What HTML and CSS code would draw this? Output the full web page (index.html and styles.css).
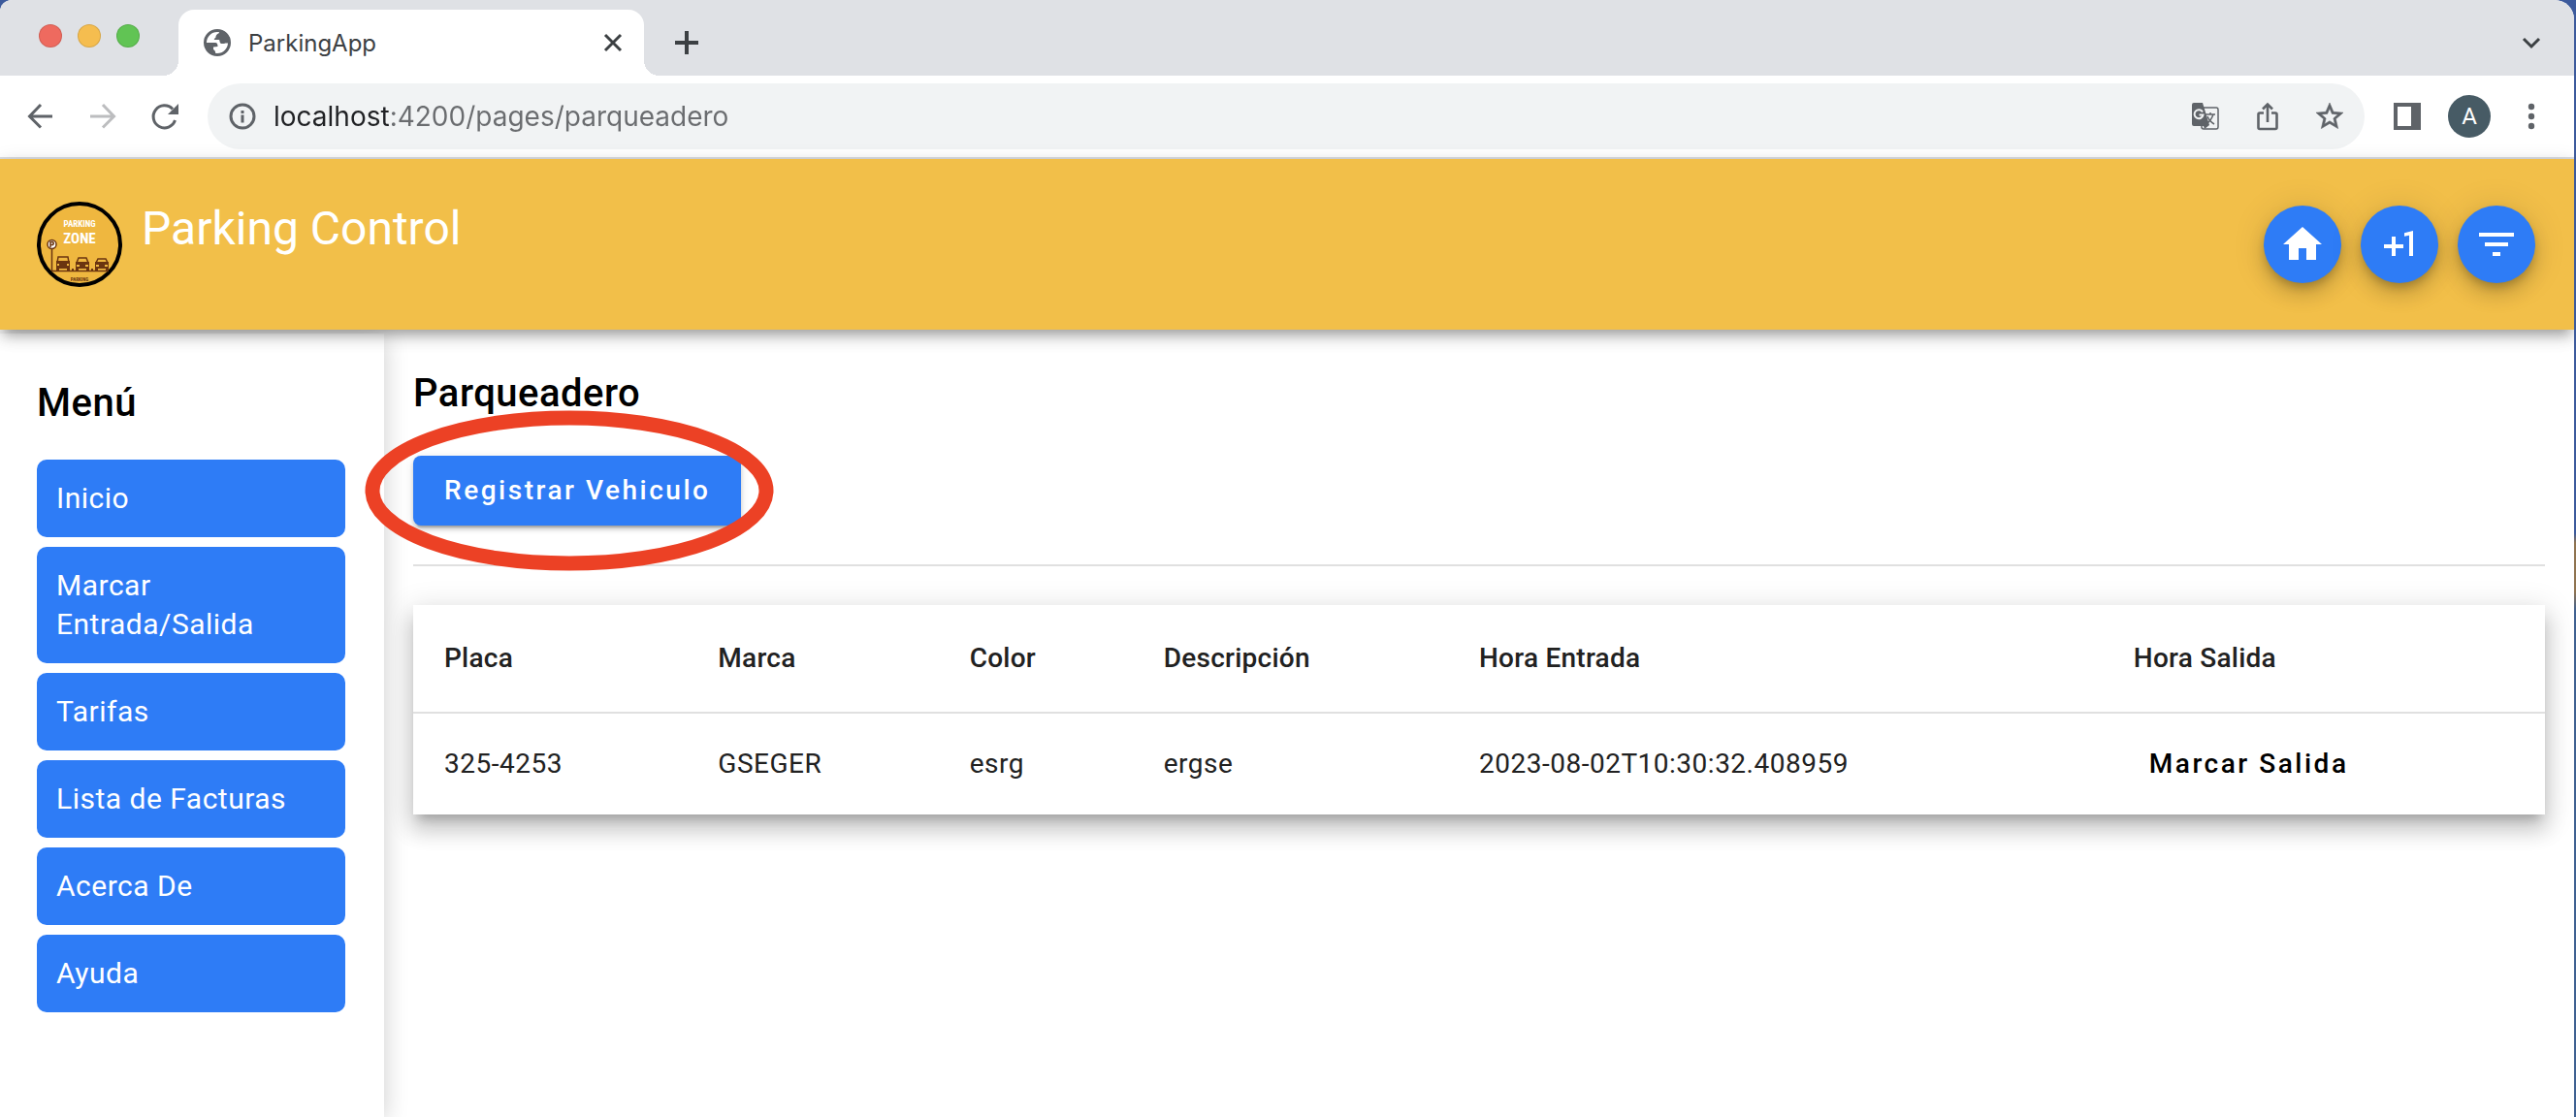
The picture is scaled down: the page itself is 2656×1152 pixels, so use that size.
FILE: index.html
```html
<!DOCTYPE html>
<html lang="es">
<head>
<meta charset="utf-8">
<title>ParkingApp</title>
<link rel="stylesheet" href="styles.css">
</head>
<body>
<div class="window">
  <div class="tabstrip">
    <div class="lights">
      <button class="light light-close" aria-label="Cerrar ventana"></button>
      <button class="light light-min" aria-label="Minimizar"></button>
      <button class="light light-max" aria-label="Maximizar"></button>
    </div>
    <div class="tab">
      <svg class="icon" viewBox="0 0 28 28" aria-hidden="true">
        <circle cx="14" cy="14" r="12.500" fill="#fff" stroke="#5f6368" stroke-width="3"/>
        <path fill="#5f6368" d="M16 1.500L16 4C14 5 13 6 12.500 7.500C13 9 11 9 10.800 11L16 11C17 12 16 14 18 15L21 15C23 14 24 15 26 14L27 9L22 3Z"/>
        <path fill="#5f6368" d="M1.500 14L12 14C14 14 14.500 16 14.500 18L10 18.500L10 21C11.500 22 12.500 23 12 26L6 25Z"/>
      </svg>
      <span class="tab-title">ParkingApp</span>
      <button class="plain" aria-label="Cerrar pestaña">
        <svg class="icon" viewBox="0 0 28 28"><path d="M6 6L22 22M22 6L6 22" stroke="#3c4043" stroke-width="3"/></svg>
      </button>
    </div>
    <button class="plain new-tab" aria-label="Nueva pestaña">
      <svg class="icon" viewBox="0 0 28 28"><path d="M14 2V26M2 14H26" stroke="#3c4043" stroke-width="4"/></svg>
    </button>
    <button class="plain tab-search" aria-label="Buscar pestañas">
      <svg class="icon" viewBox="0 0 28 28"><path d="M6 10L14 18L22 10" fill="none" stroke="#3c4043" stroke-width="3"/></svg>
    </button>
  </div>

  <div class="toolbar">
    <div class="nav-buttons">
      <button class="plain" aria-label="Atrás">
        <svg class="icon" viewBox="0 0 28 28"><path d="M26 14H3M14 2L2.500 14L14 25.500" fill="none" stroke="#5f6368" stroke-width="3"/></svg>
      </button>
      <button class="plain" aria-label="Adelante">
        <svg class="icon" viewBox="0 0 28 28"><path d="M1 14H25M14 2L25.500 14L14 25.500" fill="none" stroke="#bcbdbf" stroke-width="3"/></svg>
      </button>
      <button class="plain" aria-label="Recargar">
        <svg class="icon" viewBox="0 0 28 28"><path d="M22 6.500A11.500 11.500 0 1 0 24.500 18" fill="none" stroke="#5f6368" stroke-width="3"/><path d="M28 1V12H17Z" fill="#5f6368"/></svg>
      </button>
    </div>
    <div class="omnibox">
      <svg class="icon" viewBox="0 0 28 28" aria-hidden="true"><circle cx="14" cy="14" r="12" fill="none" stroke="#5f6368" stroke-width="3"/><path d="M12.500 8h3v3h-3zM12.500 12.500h3v8h-3z" fill="#5f6368"/></svg>
      <input class="url" type="text" aria-label="Dirección" value="localhost:4200/pages/parqueadero">
      <button class="plain" aria-label="Traducir">
        <svg class="icon" viewBox="0 0 28 28">
          <rect x="10" y="5" width="17" height="22" rx="2" fill="none" stroke="#5f6368" stroke-width="1.500"/>
          <path d="M2 0H11L18 23L13 27L12 24H2Q0 24 0 22V2Q0 0 2 0Z" fill="#5f6368"/>
          <path d="M11 9.500A4.500 4.500 0 1 0 11.500 12.500H7.500" fill="none" stroke="#f1f3f4" stroke-width="2"/>
          <path d="M14 12H24M19 10V12M22 12Q20 18 15 22M16 14Q18 19 23 22" fill="none" stroke="#5f6368" stroke-width="1.500"/>
        </svg>
      </button>
      <button class="plain" aria-label="Compartir">
        <svg class="icon" viewBox="0 0 28 28"><path d="M10 10.500H6Q4.500 10.500 4.500 12V25.500Q4.500 27 6 27H22Q23.500 27 23.500 25.500V12Q23.500 10.500 22 10.500H18M14 20V2M9 6.500L14 1.500L19 6.500" fill="none" stroke="#5f6368" stroke-width="2.600"/></svg>
      </button>
      <button class="plain" aria-label="Añadir a marcadores">
        <svg class="icon" viewBox="2 2 20 20"><path fill="#5f6368" stroke="#5f6368" stroke-width=".4" d="M22 9.240l-7.190-.62L12 2 9.190 8.630 2 9.240l5.460 4.730L5.820 21 12 17.270 18.180 21l-1.630-7.030L22 9.240zM12 15.400l-3.760 2.270 1-4.280-3.320-2.880 4.380-.38L12 6.100l1.710 4.040 4.380.38-3.320 2.880 1 4.280L12 15.400z"/></svg>
      </button>
    </div>
    <div class="extras">
      <button class="plain" aria-label="Panel lateral">
        <svg class="icon" viewBox="0 0 28 28"><path fill="#5f6368" fill-rule="evenodd" d="M0 0H28V28H0ZM4 4V24H18V4Z"/></svg>
      </button>
      <button class="avatar" aria-label="Perfil">A</button>
      <button class="plain" aria-label="Más opciones">
        <svg class="icon" viewBox="0 0 28 28"><g fill="#5f6368"><circle cx="14" cy="4" r="3.200"/><circle cx="14" cy="14" r="3.200"/><circle cx="14" cy="24" r="3.200"/></g></svg>
      </button>
    </div>
  </div>

  <header class="app-header">
    <svg class="logo" viewBox="0 0 88 88" role="img" aria-label="Parking Zone">
      <circle cx="44" cy="44" r="42" fill="#efb73f" stroke="#000" stroke-width="4"/>
      <text class="logo-small" x="44" y="26" text-anchor="middle">PARKING</text>
      <text class="logo-big" x="44" y="43" text-anchor="middle">ZONE</text>
      <g fill="none" stroke="#6b3510" stroke-width="1.500">
        <path d="M15.500 49V71M15 71.500H74"/>
        <circle cx="15.500" cy="44" r="4.500" fill="#fff"/>
        <path d="M14 47V41.500H16.500Q18 43 16.500 44.500H14"/>
        <path d="M21 63L22 57H32L33 63M41 63L43 58H51L53 63M61 63L63 59H71L73 63"/>
      </g>
      <g fill="#6b3510">
        <path d="M20 61H34V71H31V69H23V71H20ZM40 62H54V71H51V69H43V71H40ZM60 62H74V71H71V69H63V71H60Z"/>
        <path d="M36 69H38V71H36ZM56 69H58V71H56Z"/>
      </g>
      <g fill="#efb73f"><path d="M41 65H44V67H41ZM50 65H53V67H50ZM61 65H64V67H61ZM70 65H73V67H70ZM21 64H23V66H21ZM31 64H33V66H31Z"/></g>
      <text class="logo-foot" x="44" y="82" text-anchor="middle">PARKING</text>
    </svg>
    <h1 class="app-title">Parking Control</h1>
    <div class="fabs">
      <button class="fab" aria-label="Inicio"><svg viewBox="0 0 24 24"><path d="M10 20v-6h4v6h5v-8h3L12 3 2 12h3v8z"/></svg></button>
      <button class="fab" aria-label="Sumar uno"><svg viewBox="0 0 24 24"><path d="M10 8H8v4H4v2h4v4h2v-4h4v-2h-4zm4.500-1.920V7.900l2.500-.5V18h2V5z"/></svg></button>
      <button class="fab" aria-label="Filtrar"><svg viewBox="0 0 24 24"><path d="M10 18h4v-2h-4v2zM3 6v2h18V6H3zm3 7h12v-2H6v2z"/></svg></button>
    </div>
  </header>

  <div class="app-body">
    <nav class="sidebar" aria-labelledby="menu-title">
      <h2 class="heading" id="menu-title">Menú</h2>
      <div class="menu">
        <a class="menu-item" href="#inicio">Inicio</a>
        <a class="menu-item" href="#marcar">Marcar Entrada/Salida</a>
        <a class="menu-item" href="#tarifas">Tarifas</a>
        <a class="menu-item" href="#facturas">Lista de Facturas</a>
        <a class="menu-item" href="#acerca">Acerca De</a>
        <a class="menu-item" href="#ayuda">Ayuda</a>
      </div>
    </nav>
    <main class="content">
      <h2 class="heading">Parqueadero</h2>
      <div class="action">
        <button class="primary">Registrar Vehiculo</button>
        <svg class="marker" viewBox="0 0 422 166" aria-hidden="true"><ellipse cx="211" cy="83" rx="203" ry="75" fill="none" stroke="#ec4125" stroke-width="15"/></svg>
      </div>
      <hr class="divider">
      <table class="records">
        <colgroup><col class="col-placa"><col class="col-marca"><col class="col-color"><col class="col-desc"><col class="col-entrada"><col></colgroup>
        <thead>
          <tr><th>Placa</th><th>Marca</th><th>Color</th><th>Descripción</th><th>Hora Entrada</th><th>Hora Salida</th></tr>
        </thead>
        <tbody>
          <tr><td>325-4253</td><td>GSEGER</td><td>esrg</td><td>ergse</td><td>2023-08-02T10:30:32.408959</td><td><button class="text-button">Marcar Salida</button></td></tr>
        </tbody>
      </table>
    </main>
  </div>
</div>
</body>
</html>
```
FILE: styles.css
```css
* { box-sizing: border-box; }

body {
  margin: 0;
  padding-right: 2px;
  background: linear-gradient(#3c5a9c 0, #3c5a9c 550px, #8f7350 560px, #8f7350 610px, #3f6191 630px, #3f6191 100%);
  font-family: Roboto, "Liberation Sans", sans-serif;
}

button { font-family: inherit; cursor: pointer; }

.window {
  display: flex;
  flex-direction: column;
  min-height: 100vh;
  border-radius: 12px 20px 0 0;
  overflow: hidden;
  background: #fff;
}

.plain {
  display: flex;
  padding: 0;
  border: 0;
  background: none;
}

.icon {
  display: block;
  flex: none;
  width: 28px;
  height: 28px;
  overflow: visible;
}

/* Browser frame */
.tabstrip {
  display: flex;
  align-items: center;
  height: 78px;
  padding: 10px 30px 0 40px;
  background: #dfe1e5;
}

.lights {
  display: flex;
  gap: 16px;
  width: 144px;
  padding-bottom: 14px;
}

.light {
  width: 24px;
  height: 24px;
  padding: 0;
  border: 1px solid rgba(0, 0, 0, 0.12);
  border-radius: 50%;
}

.light-close { background: #ee6a5f; }
.light-min { background: #f5bd4f; }
.light-max { background: #61c454; }

.tab {
  position: relative;
  display: flex;
  align-items: center;
  gap: 18px;
  width: 480px;
  height: 68px;
  padding: 0 18px 0 26px;
  border-radius: 16px 16px 0 0;
  background: #fff;
}

/* Flared feet of the active tab */
.tab::before,
.tab::after {
  content: "";
  position: absolute;
  bottom: 0;
  width: 16px;
  height: 16px;
}

.tab::before { left: -16px; background: radial-gradient(circle at 0 0, #dfe1e5 16px, #fff 16px); }
.tab::after { right: -16px; background: radial-gradient(circle at 100% 0, #dfe1e5 16px, #fff 16px); }

.tab-title {
  flex: 1;
  color: #3c4043;
  font-family: Inter, sans-serif;
  font-size: 24px;
}

.new-tab { margin-left: 30px; }
.tab-search { margin-left: auto; }

.toolbar {
  display: flex;
  align-items: center;
  gap: 30px;
  height: 86px;
  padding: 0 30px 0 28px;
  border-bottom: 2px solid #dadce0;
  background: #fff;
}

.nav-buttons { display: flex; gap: 36px; }

.omnibox {
  display: flex;
  flex: 1;
  align-items: center;
  gap: 36px;
  height: 68px;
  padding: 0 22px;
  border-radius: 34px;
  background: #f1f3f4;
}

.url {
  flex: 1;
  min-width: 0;
  margin-left: -18px;
  padding: 0;
  border: 0;
  outline: 0;
  background: linear-gradient(to right, #202124 122px, #6a6c6f 122px);
  background-clip: text;
  -webkit-background-clip: text;
  color: transparent;
  font-family: Inter, sans-serif;
  font-size: 28px;
}

.extras { display: flex; align-items: center; gap: 28px; }

.avatar {
  width: 44px;
  height: 44px;
  padding: 0;
  border: 0;
  border-radius: 50%;
  background: #475b65;
  color: #fff;
  font-size: 24px;
}

/* Application */
.app-header {
  position: relative;
  z-index: 2;
  display: flex;
  align-items: center;
  gap: 20px;
  height: 176px;
  padding: 0 40px 0 38px;
  background: #f2bf49;
  box-shadow: 0 10px 10px -6px rgba(0, 0, 0, 0.2), 0 8px 16px 0 rgba(0, 0, 0, 0.14), 0 4px 20px 0 rgba(0, 0, 0, 0.12);
}

.logo { flex: none; width: 88px; height: 88px; }

.logo text {
  font-family: "Roboto Condensed", Roboto, sans-serif;
  font-weight: 700;
}

.logo-small { fill: #fff; font-size: 9px; }
.logo-big { fill: #fff; font-size: 15px; }
.logo-foot { fill: #6b3510; font-size: 5px; }

.app-title {
  align-self: flex-start;
  margin: 40px 0 0;
  color: #fff;
  font-size: 48px;
  font-weight: 400;
  line-height: 64px;
}

.fabs { display: flex; gap: 20px; margin-left: auto; }

.fab {
  display: grid;
  place-items: center;
  width: 80px;
  height: 80px;
  padding: 0;
  border: 0;
  border-radius: 50%;
  background: #2e7cf6;
  box-shadow: 0 6px 10px -2px rgba(0, 0, 0, 0.2), 0 12px 20px 0 rgba(0, 0, 0, 0.14), 0 2px 36px 0 rgba(0, 0, 0, 0.12);
}

.fab svg { width: 48px; height: 48px; fill: #fff; }

.app-body { display: flex; flex: 1; }

.sidebar {
  flex: none;
  width: 396px;
  margin-top: 4px;
  padding: 44px 40px 40px 38px;
  background: #fff;
  box-shadow: 0 4px 24px 0 rgba(0, 0, 0, 0.2);
}

.heading {
  margin: 0;
  color: #000;
  font-size: 40px;
  font-weight: 500;
  line-height: 56px;
  letter-spacing: 0.0125em;
}

.menu {
  display: flex;
  flex-direction: column;
  gap: 10px;
  margin-top: 30px;
}

.menu-item {
  padding: 20px;
  border-radius: 10px;
  background: #2e7cf6;
  color: #fff;
  font-size: 30px;
  line-height: 40px;
  letter-spacing: 0.0165em;
  text-decoration: none;
}

.content { flex: 1; min-width: 0; padding: 38px 30px; }

.action {
  position: relative;
  width: max-content;
  margin-top: 36px;
}

.primary {
  display: block;
  height: 72px;
  padding: 0 32px 2px;
  border: 0;
  border-radius: 8px;
  background: #2e7cf6;
  box-shadow: 0 6px 2px -4px rgba(0, 0, 0, 0.2), 0 4px 4px 0 rgba(0, 0, 0, 0.14), 0 2px 10px 0 rgba(0, 0, 0, 0.12);
  color: #fff;
  font-size: 28px;
  font-weight: 500;
  letter-spacing: 0.09em;
}

/* Annotation ring over the action button */
.marker {
  position: absolute;
  top: -47px;
  left: -50px;
  z-index: 3;
  width: 422px;
  height: 166px;
  pointer-events: none;
}

.divider {
  height: 2px;
  margin: 40px 0;
  border: 0;
  background: #e0e0e0;
}

.records {
  width: 100%;
  table-layout: fixed;
  border-collapse: separate;
  border-spacing: 0;
  background: #fff;
  box-shadow: 0 10px 10px -6px rgba(0, 0, 0, 0.2), 0 16px 20px 2px rgba(0, 0, 0, 0.14), 0 6px 28px 4px rgba(0, 0, 0, 0.12);
  color: #212121;
  font-size: 28px;
  text-align: left;
}

.col-placa { width: 14.3%; }
.col-marca { width: 11.8%; }
.col-color { width: 9.1%; }
.col-desc { width: 14.8%; }
.col-entrada { width: 30.7%; }

.records th {
  height: 112px;
  padding: 0 0 2px;
  border-bottom: 2px solid #e0e0e0;
  font-weight: 500;
  letter-spacing: 0.009em;
}

.records td {
  height: 104px;
  padding: 0 0 2px;
  letter-spacing: 0.018em;
}

.records th:first-child,
.records td:first-child { padding-left: 32px; }

.text-button {
  padding: 0 16px;
  border: 0;
  background: none;
  color: #000;
  font-size: 28px;
  font-weight: 500;
  letter-spacing: 0.09em;
}
```
